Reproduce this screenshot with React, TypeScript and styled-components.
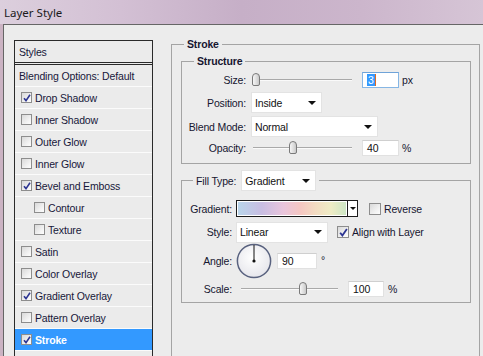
import React from "react";
import styled, { createGlobalStyle } from "styled-components";

const UI = `"Liberation Sans", Arial, sans-serif`;

const Global = createGlobalStyle`
  html, body { margin: 0; padding: 0; }
  body {
    width: 483px;
    height: 356px;
    overflow: hidden;
    background: #cbb3c3;
    font-family: ${UI};
    font-size: 10.5px;
    letter-spacing: -0.15px;
  }
`;

const Frame = styled.div`
  width: 483px;
  height: 356px;
  display: flex;
  flex-direction: column;
  background: #cbb3c3;
  overflow: hidden;
`;

const TitleBar = styled.div`
  height: 24px;
  flex-shrink: 0;
  display: flex;
  align-items: center;
  padding-left: 4px;
  font-family: "Noto Sans", ${UI};
  font-size: 11.5px;
  letter-spacing: 0;
  color: #1b1b1b;
  background: linear-gradient(
    90deg,
    #dccfdd 0%,
    #d3c0d4 25%,
    #c6afc7 50%,
    #ccb6cc 75%,
    #d6c5d6 100%
  );
`;

const Body = styled.div`
  flex: 1;
  margin-left: 3px;
  border-left: 1px solid #666;
  border-top: 1px solid #666;
  background: #ececec;
  display: flex;
  align-items: flex-start;
  overflow: hidden;
`;

const StyleList = styled.div`
  flex-shrink: 0;
  box-sizing: border-box;
  width: 139px;
  height: 340px;
  margin: 15px 0 0 10px;
  border: 1px solid #2a2a2a;
  background: #ebebeb;
  color: #17173a;
`;

const ListHeader = styled.div`
  height: 21px;
  display: flex;
  align-items: center;
  padding-left: 4px;
  border-bottom: 3px double #2a2a2a;
`;

const ListRow = styled.div<{ $indent: number; $selected?: boolean }>`
  height: 21px;
  display: flex;
  align-items: center;
  gap: 3px;
  padding-left: ${(p) => p.$indent}px;
  border-bottom: 1px solid #fbfbfb;
  background: ${(p) => (p.$selected ? "#3399ff" : "transparent")};
  color: ${(p) => (p.$selected ? "#ffffff" : "inherit")};
  font-weight: ${(p) => (p.$selected ? "bold" : "normal")};
`;

const Box = styled.span<{ $size: number }>`
  flex-shrink: 0;
  box-sizing: border-box;
  width: ${(p) => p.$size}px;
  height: ${(p) => p.$size}px;
  border: 1px solid #8d8d8d;
  background: linear-gradient(135deg, #d9d9d9 0%, #f4f4f4 70%, #fdfdfd 100%);
  display: flex;
  align-items: center;
  justify-content: center;
`;

const CheckBox = ({ checked, size = 11 }: { checked?: boolean; size?: number }) => (
  <Box $size={size}>
    {checked && (
      <svg width={size - 3} height={size - 3} viewBox="0 0 8 8">
        <path d="M1 4.2 L3 6.6 L7 0.8" fill="none" stroke="#2d3592" strokeWidth="1.6" />
      </svg>
    )}
  </Box>
);

const Panel = styled.div`
  flex-shrink: 0;
  width: 309px;
  margin: 12px 0 0 18px;
  color: #161630;
`;

const Group = styled.fieldset<{ $outer?: boolean; $gapTop?: number }>`
  margin: ${(p) => p.$gapTop ?? 0}px 0 0 0;
  padding: ${(p) => (p.$outer ? "0 8px 0 9px" : "0")};
  min-width: 0;
  box-sizing: border-box;
  border: 1px solid #a4a4a4;
  height: ${(p) => (p.$outer ? "340px" : "auto")};
`;

const Legend = styled.legend<{ $offset: number }>`
  margin-left: ${(p) => p.$offset}px;
  padding: 0 3px;
  font-weight: bold;
  font-size: 10.5px;
  line-height: 14px;
`;

const FillLegend = styled.legend`
  margin-left: 11px;
  padding: 0 3px;
  display: flex;
  align-items: center;
  gap: 5px;
  height: 21px;
`;

const Rows = styled.div<{ $pt: number; $pb: number }>`
  display: flex;
  flex-direction: column;
  padding: ${(p) => p.$pt}px 0 ${(p) => p.$pb}px 0;
`;

const Row = styled.div<{ $h: number }>`
  height: ${(p) => p.$h}px;
  display: flex;
  align-items: center;
`;

const Label = styled.span<{ $w: number }>`
  width: ${(p) => p.$w}px;
  flex-shrink: 0;
  text-align: right;
  white-space: nowrap;
`;

const Spacer = styled.span<{ $w: number }>`
  width: ${(p) => p.$w}px;
  flex-shrink: 0;
`;

const TextBox = styled.div<{ $w: number; $focus?: boolean }>`
  box-sizing: border-box;
  width: ${(p) => p.$w}px;
  height: 16px;
  background: #fff;
  border: 1px solid ${(p) => (p.$focus ? "#86b6e4" : "#e1e1e1")};
  border-top-color: ${(p) => (p.$focus ? "#6fa3d8" : "#cfcfcf")};
  display: flex;
  align-items: center;
  padding-left: 4px;
  color: #111;
`;

const Selected = styled.span`
  background: #3399ff;
  color: #fff;
  padding: 0 1px;
  border-right: 1px solid #e06a20;
`;

const Unit = styled.span<{ $ml: number; $raise?: boolean }>`
  margin-left: ${(p) => p.$ml}px;
  align-self: ${(p) => (p.$raise ? "flex-start" : "center")};
  margin-top: ${(p) => (p.$raise ? "9px" : "0")};
`;

const SelectBox = styled.div<{ $w: number }>`
  box-sizing: border-box;
  width: ${(p) => p.$w}px;
  height: 21px;
  background: #fff;
  border: 1px solid #e3e3e3;
  display: flex;
  align-items: center;
  justify-content: space-between;
  padding: 0 5px 0 3px;
  color: #111;
  font-weight: normal;
`;

const Caret = styled.span`
  width: 0;
  height: 0;
  border-left: 4px solid transparent;
  border-right: 4px solid transparent;
  border-top: 4px solid #111;
`;

const Select = ({ w, value }: { w: number; value: string }) => (
  <SelectBox $w={w}>
    <span>{value}</span>
    <Caret />
  </SelectBox>
);

const Track = styled.div<{ $w: number }>`
  position: relative;
  width: ${(p) => p.$w}px;
  height: 13px;
  flex-shrink: 0;
  &::before {
    content: "";
    position: absolute;
    left: 1px;
    right: 0;
    top: 6px;
    height: 1px;
    background: #a9a9a9;
    border-bottom: 1px solid #fafafa;
  }
`;

const Thumb = styled.div`
  position: absolute;
  top: 0;
  width: 8px;
  height: 13px;
  box-sizing: border-box;
  border: 1px solid #7a7a7a;
  border-radius: 4px 4px 2px 2px;
  background: linear-gradient(90deg, #f6f6f6 0%, #dcdcdc 60%, #c9c9c9 100%);
`;

const Slider = ({ w, frac }: { w: number; frac: number }) => (
  <Track $w={w}>
    <Thumb style={{ left: Math.round(frac * (w - 8)) }} />
  </Track>
);

const GradientBox = styled.div`
  box-sizing: border-box;
  width: 122px;
  height: 17px;
  border: 1px solid #1b1b1b;
  display: flex;
`;

const GradientFill = styled.div`
  flex: 1;
  border: 1px solid #fff;
  background: linear-gradient(
    90deg,
    #b9d5ea 0%,
    #c8bde2 22%,
    #e9c5dc 42%,
    #f5c7c2 58%,
    #f3dcc2 72%,
    #efecc5 86%,
    #cde6c5 100%
  );
`;

const GradientArrow = styled.div`
  width: 9px;
  border-left: 1px solid #1b1b1b;
  background: #fff;
  display: flex;
  align-items: center;
  justify-content: center;
`;

const SmallCaret = styled.span`
  width: 0;
  height: 0;
  border-left: 3px solid transparent;
  border-right: 3px solid transparent;
  border-top: 3px solid #111;
`;

const CheckLabel = styled.span`
  display: flex;
  align-items: center;
  gap: 3px;
`;

const Dial = () => (
  <svg width="36" height="36" viewBox="0 0 36 36">
    <defs>
      <radialGradient id="dialFill" cx="0.45" cy="0.4" r="0.65">
        <stop offset="0" stopColor="#ffffff" />
        <stop offset="1" stopColor="#e4e4ea" />
      </radialGradient>
    </defs>
    <circle cx="18" cy="18" r="16.6" fill="url(#dialFill)" stroke="#59627f" strokeWidth="1.5" />
    <line x1="18" y1="18" x2="18" y2="2" stroke="#111" strokeWidth="1" />
    <circle cx="18" cy="18" r="1.6" fill="#111" />
  </svg>
);

const items: { label: string; checked: boolean; indent?: boolean; selected?: boolean }[] = [
  { label: "Drop Shadow", checked: true },
  { label: "Inner Shadow", checked: false },
  { label: "Outer Glow", checked: false },
  { label: "Inner Glow", checked: false },
  { label: "Bevel and Emboss", checked: true },
  { label: "Contour", checked: false, indent: true },
  { label: "Texture", checked: false, indent: true },
  { label: "Satin", checked: false },
  { label: "Color Overlay", checked: false },
  { label: "Gradient Overlay", checked: true },
  { label: "Pattern Overlay", checked: false },
  { label: "Stroke", checked: true, selected: true },
];

export default function App() {
  return (
    <Frame>
      <Global />
      <TitleBar>Layer Style</TitleBar>
      <Body>
        <StyleList>
          <ListHeader>Styles</ListHeader>
          <ListRow $indent={4}>Blending Options: Default</ListRow>
          {items.map((it) => (
            <ListRow key={it.label} $indent={it.indent ? 19 : 6} $selected={it.selected}>
              <CheckBox checked={it.checked} />
              <span>{it.label}</span>
            </ListRow>
          ))}
        </StyleList>

        <Panel>
          <Group $outer>
            <Legend $offset={3}>Stroke</Legend>

            <Group $gapTop={3}>
              <Legend $offset={12}>Structure</Legend>
              <Rows $pt={0} $pb={7}>
                <Row $h={23}>
                  <Label $w={64}>Size:</Label>
                  <Spacer $w={6} />
                  <Slider w={100} frac={0} />
                  <Spacer $w={10} />
                  <TextBox $w={37} $focus>
                    <Selected>3</Selected>
                  </TextBox>
                  <Unit $ml={3}>px</Unit>
                </Row>
                <Row $h={23}>
                  <Label $w={64}>Position:</Label>
                  <Spacer $w={5} />
                  <Select w={71} value="Inside" />
                </Row>
                <Row $h={25}>
                  <Label $w={64}>Blend Mode:</Label>
                  <Spacer $w={5} />
                  <Select w={127} value="Normal" />
                </Row>
                <Row $h={17}>
                  <Label $w={64}>Opacity:</Label>
                  <Spacer $w={6} />
                  <Slider w={100} frac={0.4} />
                  <Spacer $w={10} />
                  <TextBox $w={37}>40</TextBox>
                  <Unit $ml={3}>%</Unit>
                </Row>
              </Rows>
            </Group>

            <Group $gapTop={6}>
              <FillLegend>
                <span>Fill Type:</span>
                <Select w={75} value="Gradient" />
              </FillLegend>
              <Rows $pt={7} $pb={2}>
                <Row $h={21}>
                  <Label $w={50}>Gradient:</Label>
                  <Spacer $w={4} />
                  <GradientBox>
                    <GradientFill />
                    <GradientArrow>
                      <SmallCaret />
                    </GradientArrow>
                  </GradientBox>
                  <Spacer $w={11} />
                  <CheckLabel>
                    <CheckBox size={12} />
                    <span>Reverse</span>
                  </CheckLabel>
                </Row>
                <Row $h={26}>
                  <Label $w={50}>Style:</Label>
                  <Spacer $w={4} />
                  <Select w={92} value="Linear" />
                  <Spacer $w={9} />
                  <CheckLabel>
                    <CheckBox size={12} checked />
                    <span>Align with Layer</span>
                  </CheckLabel>
                </Row>
                <Row $h={32}>
                  <Label $w={50}>Angle:</Label>
                  <Spacer $w={4} />
                  <Dial />
                  <Spacer $w={5} />
                  <TextBox $w={40}>90</TextBox>
                  <Unit $ml={4} $raise>°</Unit>
                </Row>
                <Row $h={23}>
                  <Label $w={50}>Scale:</Label>
                  <Spacer $w={8} />
                  <Slider w={98} frac={0.66} />
                  <Spacer $w={10} />
                  <TextBox $w={36}>100</TextBox>
                  <Unit $ml={4}>%</Unit>
                </Row>
              </Rows>
            </Group>
          </Group>
        </Panel>
      </Body>
    </Frame>
  );
}
